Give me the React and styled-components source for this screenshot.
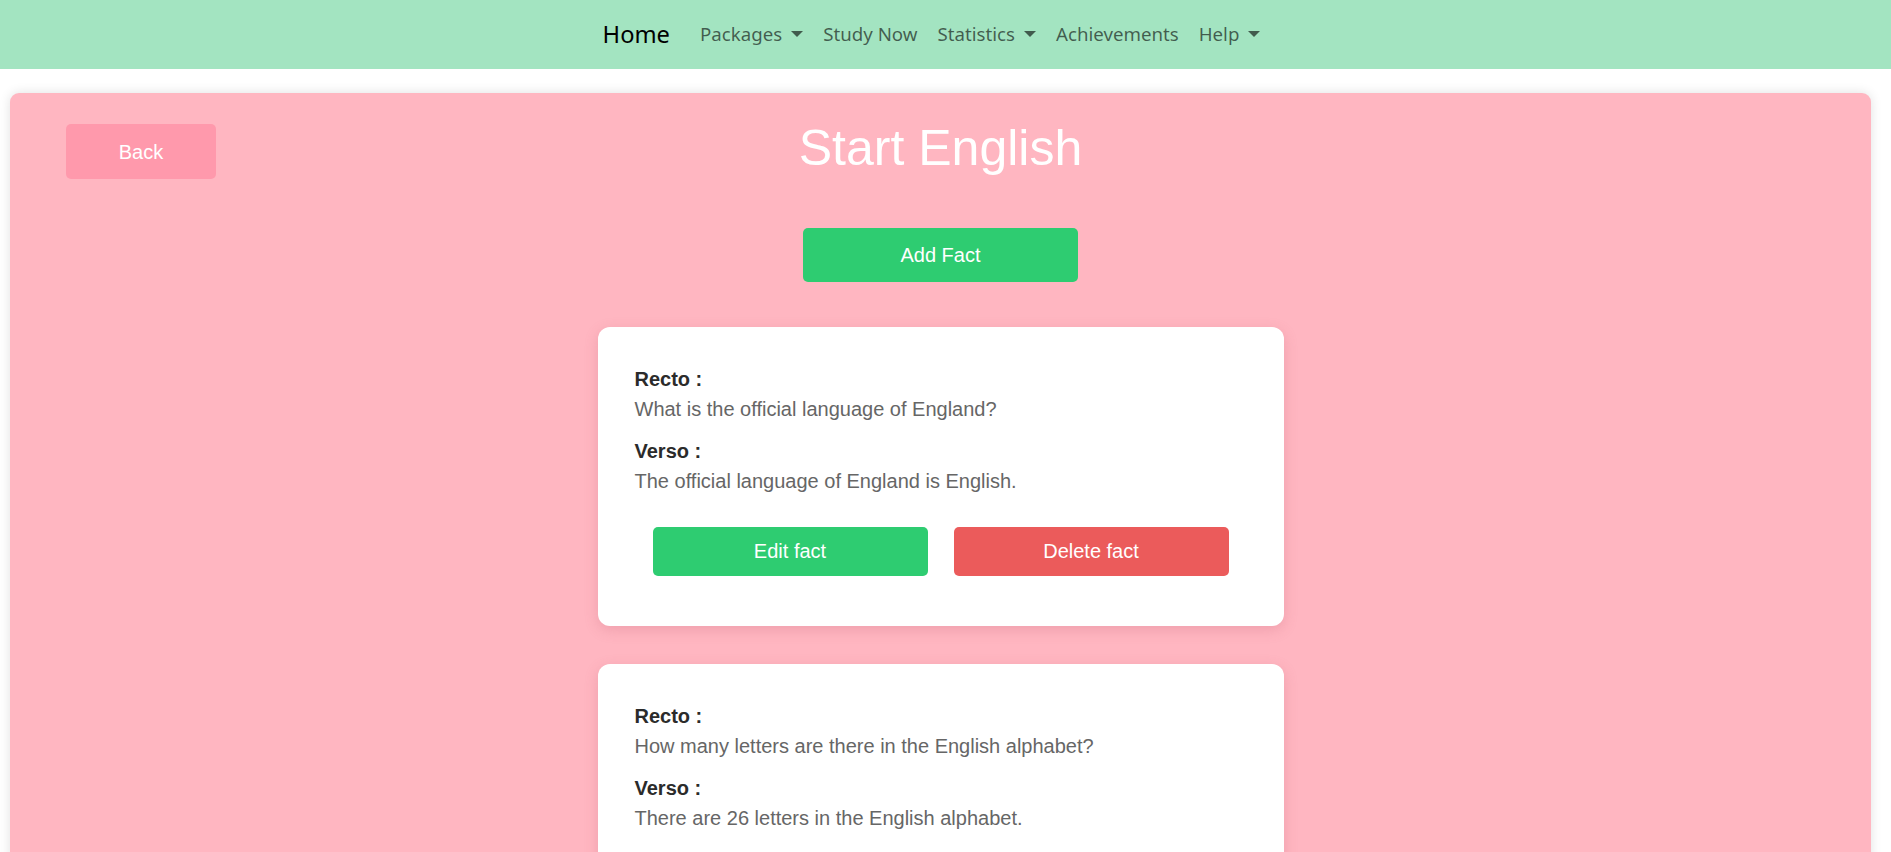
import React from "react";
import styled, { createGlobalStyle } from "styled-components";

const GlobalStyle = createGlobalStyle`
  html, body { margin: 0; padding: 0; background: #ffffff; }
  body { font-family: "Liberation Sans", Arial, sans-serif; overflow: hidden; }
  * { box-sizing: border-box; }
`;

const NavBar = styled.nav`
  height: 69px;
  background: #a3e4c1;
  display: flex;
  align-items: center;
  justify-content: center;
  padding-right: 18px;
  font-family: "Segoe UI", "Noto Sans", sans-serif;
`;

const Brand = styled.a`
  font-size: 23.7px;
  color: #000;
  margin-right: 20px;
  text-decoration: none;
  line-height: 1.5;
`;

const NavLink = styled.a`
  font-size: 18.7px;
  color: rgba(0, 0, 0, 0.6);
  padding: 0 10px;
  text-decoration: none;
  display: flex;
  align-items: center;
  line-height: 1.5;
`;

const Caret = styled.span`
  display: inline-block;
  margin-left: 9px;
  border-top: 6px solid rgba(0, 0, 0, 0.6);
  border-left: 6px solid transparent;
  border-right: 6px solid transparent;
`;

const Panel = styled.main`
  margin: 24px 20px 0 10px;
  background: #ffb6c1;
  border-radius: 9px;
  box-shadow: 0 0 12px rgba(0, 0, 0, 0.12);
  padding: 31px 56px 60px;
  min-height: 900px;
`;

const Header = styled.div`
  display: grid;
  grid-template-columns: 1fr auto 1fr;
  align-items: start;
`;

const BackButton = styled.button`
  justify-self: start;
  width: 150px;
  height: 55px;
  border: none;
  border-radius: 5px;
  background: #ff99ac;
  color: #fff;
  font-family: "Liberation Sans", Arial, sans-serif;
  font-size: 20px;
  padding-top: 2px;
`;

const Title = styled.h1`
  margin: 0;
  font-family: "Liberation Sans", Arial, sans-serif;
  font-weight: 400;
  font-size: 50px;
  line-height: 48px;
  color: #fff;
`;

const Center = styled.div`
  display: flex;
  flex-direction: column;
  align-items: center;
`;

const Button = styled.button`
  width: 275px;
  height: ${(p) => p.$h || 49}px;
  border: none;
  border-radius: 5px;
  background: ${(p) => (p.$danger ? "#eb5b5b" : "#2ecc71")};
  color: #fff;
  font-family: "Liberation Sans", Arial, sans-serif;
  font-size: 20px;
`;

const AddRow = styled.div`
  margin-top: 49px;
  margin-bottom: 45px;
`;

const Card = styled.section`
  width: 686px;
  background: #fff;
  border-radius: 12px;
  box-shadow: 0 4px 14px rgba(180, 80, 100, 0.22);
  padding: 37px 37px 50px;
  margin-bottom: 38px;
`;

const Field = styled.div`
  margin-bottom: 12px;
`;

const Label = styled.div`
  font-weight: 700;
  font-size: 20px;
  line-height: 30px;
  color: #2b2b2b;
`;

const Value = styled.div`
  font-size: 20px;
  line-height: 30px;
  color: #666;
`;

const Actions = styled.div`
  display: flex;
  justify-content: center;
  gap: 26px;
  margin-top: 31px;
`;

const facts = [
  {
    recto: "What is the official language of England?",
    verso: "The official language of England is English.",
  },
  {
    recto: "How many letters are there in the English alphabet?",
    verso: "There are 26 letters in the English alphabet.",
  },
];

export default function App() {
  return (
    <>
      <GlobalStyle />
      <NavBar>
        <Brand>Home</Brand>
        <NavLink>Packages<Caret /></NavLink>
        <NavLink>Study Now</NavLink>
        <NavLink>Statistics<Caret /></NavLink>
        <NavLink>Achievements</NavLink>
        <NavLink>Help<Caret /></NavLink>
      </NavBar>
      <Panel>
        <Header>
          <BackButton>Back</BackButton>
          <Title>Start English</Title>
          <div />
        </Header>
        <Center>
          <AddRow>
            <Button $h={54}>Add Fact</Button>
          </AddRow>
          {facts.map((f, i) => (
            <Card key={i}>
              <Field>
                <Label>Recto :</Label>
                <Value>{f.recto}</Value>
              </Field>
              <Field>
                <Label>Verso :</Label>
                <Value>{f.verso}</Value>
              </Field>
              <Actions>
                <Button>Edit fact</Button>
                <Button $danger>Delete fact</Button>
              </Actions>
            </Card>
          ))}
        </Center>
      </Panel>
    </>
  );
}
